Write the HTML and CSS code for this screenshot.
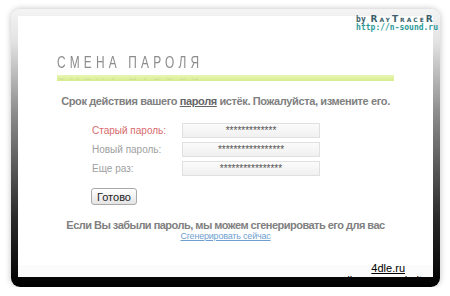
FILE: index.html
```html
<!DOCTYPE html>
<html lang="ru">
<head>
  <meta charset="UTF-8">
  <title>Смена пароля</title>
  <link rel="stylesheet" href="styles.css">
</head>
<body>
  <div class="frame">
    <div class="panel">
      <h1 class="title">Смена пароля</h1>
      <div class="title-bar"></div>

      <p class="notice">Срок действия вашего <u>пароля</u> истёк. Пожалуйста, измените его.</p>

      <form class="pass-form">
        <label class="field-label error">Старый пароль:</label>
        <input class="field" type="text" value="*************">
        <label class="field-label">Новый пароль:</label>
        <input class="field" type="text" value="*****************">
        <label class="field-label">Еще раз:</label>
        <input class="field" type="text" value="****************">
        <button class="btn" type="button">Готово</button>
      </form>

      <p class="forgot">Если Вы забыли пароль, мы можем сгенерировать его для вас</p>
      <a class="gen-link" href="#">Сгенерировать сейчас</a>

      <div class="footer">
        <a class="site-link" href="#">4dle.ru</a>
        <div class="site-cut">dle-news.website</div>
      </div>
    </div>
    <div class="logo">
      <div class="logo-by">by <span>RayTraceR</span></div>
      <div class="logo-url">http://n-sound.ru</div>
    </div>
  </div>
</body>
</html>
```

FILE: styles.css
```css
* { box-sizing: border-box; }
body {
  margin: 0;
  background: #fff;
  font-family: "Liberation Sans", Arial, sans-serif;
}
.frame {
  position: relative;
  width: 429px;
  height: 278px;
  margin: 9px 0 0 11px;
  padding: 7px 7px 10px 7px;
  border-radius: 9px;
  background: linear-gradient(#f4f4f4 0%, #e2e2e2 12%, #8a8a8a 38%, #2a2a2a 75%, #000 100%);
  box-shadow: 0 0 6px rgba(0, 0, 0, 0.25);
}
.panel {
  position: relative;
  height: 100%;
  background: #fff;
  overflow: hidden;
  padding-top: 36px;
}
.logo {
  position: absolute;
  z-index: 2;
  top: 6px;
  right: 2px;
  font-family: "DejaVu Sans Mono", monospace;
  font-weight: bold;
  line-height: 8px;
}
.logo-by {
  font-size: 8px;
  color: #3b5f6a;
}
.logo-by span {
  font-family: "DejaVu Sans", sans-serif;
  font-variant: small-caps;
  letter-spacing: 2px;
  font-size: 9px;
}
.logo-url {
  font-size: 8px;
  color: #2e9a9a;
}
.title {
  margin: 2px 0 0 39px;
  font-family: "Liberation Sans", sans-serif;
  font-weight: normal;
  font-size: 17px;
  line-height: 18px;
  letter-spacing: 6px;
  text-transform: uppercase;
  color: #8c8c8c;
  transform: scaleX(0.7);
  transform-origin: left center;
  -webkit-box-reflect: below -8px linear-gradient(rgba(255, 255, 255, 0.25), transparent 30%);
}
.title-bar {
  width: 337px;
  height: 6px;
  margin: 3px 0 0 39px;
  background: linear-gradient(#e9f6b6, #d6ec8a);
}
.notice {
  margin: 14px 0 0;
  text-align: center;
  font-weight: bold;
  font-size: 11px;
  letter-spacing: -0.38px;
  color: #808080;
}
.notice u { color: #666; }
.pass-form {
  display: grid;
  grid-template-columns: 90px 138px;
  row-gap: 4px;
  align-items: center;
  margin: 16px 0 0 74px;
}
.field-label {
  font-size: 10px;
  color: #a0a0a0;
}
.field-label.error { color: #d86a6a; }
.field {
  height: 15px;
  padding: 0;
  border: 1px solid #e0e0e0;
  background: linear-gradient(#fbfbfb, #f0f0f0);
  text-align: center;
  font-family: "Liberation Sans", sans-serif;
  font-size: 10px;
  color: #555;
}
.btn {
  grid-column: 1;
  justify-self: start;
  width: 46px;
  height: 17px;
  margin-top: 8px;
  margin-left: -1px;
  padding: 0;
  border: 1px solid #a9a9a9;
  border-radius: 3px;
  background: linear-gradient(#fff, #e4e4e4);
  font-family: "Liberation Sans", sans-serif;
  font-size: 11px;
  color: #222;
}
.forgot {
  margin: 14px 0 0;
  text-align: center;
  font-weight: bold;
  font-size: 11px;
  letter-spacing: -0.52px;
  color: #808080;
}
.gen-link {
  display: block;
  width: max-content;
  margin: 0 auto;
  font-size: 9px;
  letter-spacing: -0.2px;
  color: #6f9fd0;
}
.footer {
  position: absolute;
  left: 0;
  right: 0;
  bottom: 0;
  height: 12px;
  background: #fbfbfb;
}
.site-link {
  position: absolute;
  right: 28px;
  bottom: 3px;
  font-family: "Liberation Sans", sans-serif;
  font-size: 11px;
  color: #000;
}
.site-cut {
  position: absolute;
  right: 5px;
  bottom: -9px;
  font-family: "Liberation Sans", sans-serif;
  font-size: 11px;
  color: #000;
}
```
